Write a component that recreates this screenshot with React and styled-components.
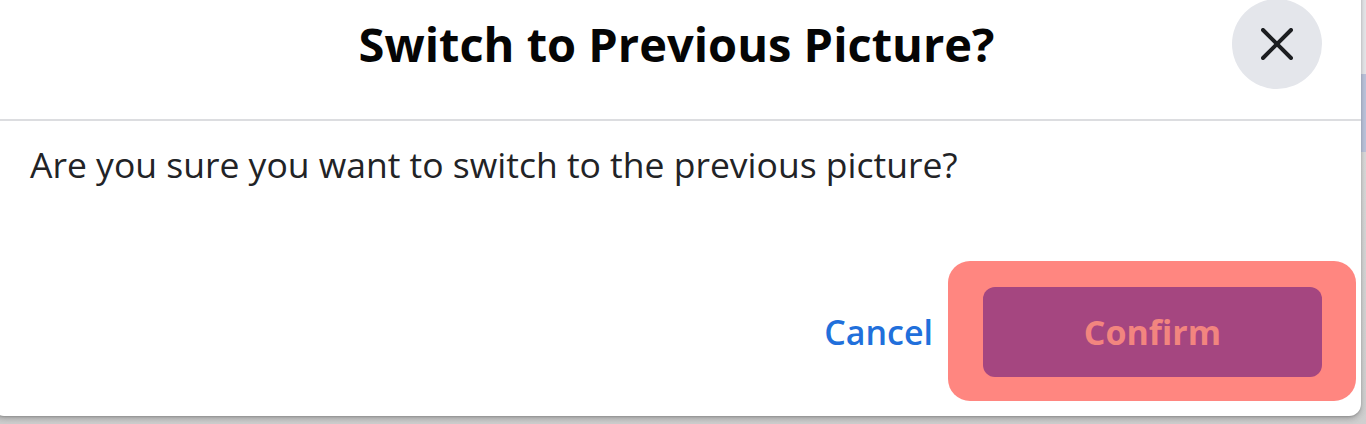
import React from "react";
import styled, { createGlobalStyle } from "styled-components";

const Global = createGlobalStyle`
  html, body { margin: 0; padding: 0; }
  body {
    width: 1366px;
    height: 424px;
    overflow: hidden;
    font-family: "Open Sans", "Noto Sans", Arial, sans-serif;
    background: linear-gradient(
      to bottom,
      #e6e7ea 0px,
      #e6e7ea 74px,
      #bcc4dc 74px,
      #bcc4dc 152px,
      #d9d9d9 152px,
      #cfcfcf 424px
    );
  }
`;

const Dialog = styled.div`
  box-sizing: border-box;
  width: 1369px;
  margin: -31px 0 0 -8px;
  background: #ffffff;
  border-radius: 0 0 12px 12px;
  box-shadow: 0 3px 6px rgba(0, 0, 0, 0.22), 0 1px 2px rgba(0, 0, 0, 0.15);
  display: flex;
  flex-direction: column;
`;

const Header = styled.header`
  box-sizing: border-box;
  height: 152px;
  padding: 0 39px;
  display: grid;
  grid-template-columns: 1fr auto 1fr;
  align-items: center;
  border-bottom: 2px solid #dcdde0;
`;

const Title = styled.h2`
  grid-column: 2;
  margin: 0;
  font-size: 47px;
  font-weight: 700;
  color: #050505;
  white-space: nowrap;
`;

const CloseButton = styled.button`
  grid-column: 3;
  justify-self: end;
  width: 90px;
  height: 90px;
  border: none;
  border-radius: 50%;
  background: #e4e6eb;
  display: flex;
  align-items: center;
  justify-content: center;
  padding: 0;
  cursor: pointer;
`;

const Body = styled.div`
  padding: 20px 38px 0;
`;

const Message = styled.p`
  margin: 0;
  font-size: 35.5px;
  line-height: 46px;
  color: #222326;
`;

const Footer = styled.footer`
  display: flex;
  justify-content: flex-end;
  align-items: center;
  gap: 50px;
  padding: 100px 39px 39px;
`;

const TextButton = styled.button`
  border: none;
  background: none;
  padding: 0;
  font-family: inherit;
  font-size: 34px;
  font-weight: 600;
  color: #216fdb;
  cursor: pointer;
`;

const Highlight = styled.div`
  position: relative;
  z-index: 0;
  &::before {
    content: "";
    position: absolute;
    top: -26px;
    right: -34px;
    bottom: -24px;
    left: -35px;
    border-radius: 22px;
    background: #ff8680;
    z-index: -1;
  }
`;

const PrimaryButton = styled.button`
  width: 339px;
  height: 90px;
  border: none;
  border-radius: 12px;
  background: #a54680;
  color: #f2857f;
  font-family: inherit;
  font-size: 34px;
  font-weight: 700;
  display: flex;
  align-items: center;
  justify-content: center;
  cursor: pointer;
`;

export default function App() {
  return (
    <>
      <Global />
      <Dialog>
        <Header>
          <Title>Switch to Previous Picture?</Title>
          <CloseButton aria-label="Close">
            <svg width="32" height="32" viewBox="0 0 32 32">
              <path
                d="M2 2 L30 30 M30 2 L2 30"
                stroke="#1c1e21"
                strokeWidth="4"
                strokeLinecap="round"
                fill="none"
              />
            </svg>
          </CloseButton>
        </Header>
        <Body>
          <Message>Are you sure you want to switch to the previous picture?</Message>
        </Body>
        <Footer>
          <TextButton>Cancel</TextButton>
          <Highlight>
            <PrimaryButton>Confirm</PrimaryButton>
          </Highlight>
        </Footer>
      </Dialog>
    </>
  );
}
